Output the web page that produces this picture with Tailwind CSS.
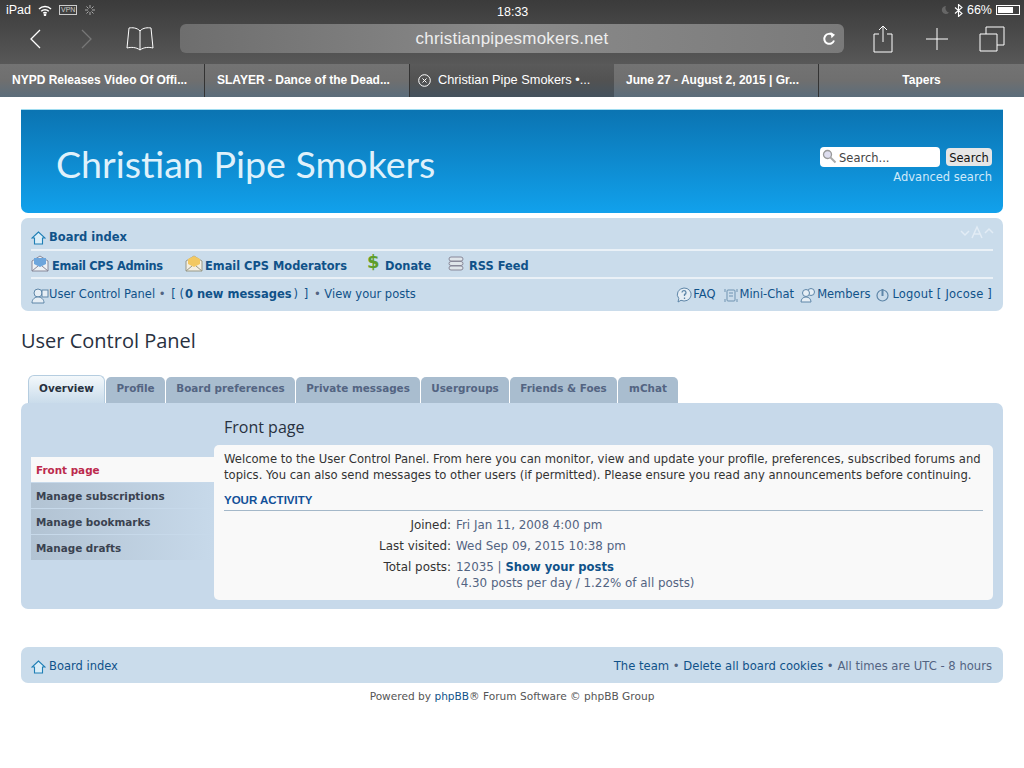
<!DOCTYPE html>
<html lang="en">
<head>
<meta charset="UTF-8">
<title>User Control Panel</title>
<script src="https://cdn.jsdelivr.net/npm/@tailwindcss/browser@4"></script>
</head>
<body class="bg-white w-[1024px] h-[768px] overflow-hidden font-['DejaVu_Sans',sans-serif] text-[11.5px] text-[#536482]">
  <!-- ipad safari chrome -->
  <div class="h-[64px] bg-gradient-to-b from-[#3b3b3b] to-[#585858] text-white font-['Liberation_Sans',sans-serif]">
    <div class="h-[20px] flex items-center justify-between pl-[6px] pr-[4px] text-[12.5px] relative">
      <div class="flex items-center gap-[7px]">
        <span>iPad</span>
        <svg width="14" height="11" viewBox="0 0 14 11" fill="none" stroke="#fff" stroke-width="1.5"><path d="M1 4a8.5 8.5 0 0 1 12 0M3.2 6.2a5.4 5.4 0 0 1 7.6 0M5.3 8.2a2.4 2.4 0 0 1 3.4 0"/><circle cx="7" cy="9.8" r=".6" fill="#fff"/></svg>
        <span class="border border-[#ccc] text-[7px] leading-[8px] px-[1px] text-[#ccc]">VPN</span>
        <svg width="12" height="12" viewBox="0 0 12 12" stroke="#aaa" stroke-width="1"><path d="M6 1v3M6 8v3M1 6h3M8 6h3M2.500 2.500l2 2M7.500 7.500l2 2M9.500 2.500l-2 2M4.500 7.500l-2 2"/></svg>
      </div>
      <span class="absolute left-[497px] top-[3px]">18:33</span>
      <div class="flex items-center gap-[4px]">
        <svg width="10" height="10" viewBox="0 0 10 10"><path d="M6 1a4 4 0 1 0 3 6.500A4.500 4.500 0 0 1 6 1z" fill="#666"/></svg>
        <svg width="9" height="13" viewBox="0 0 9 13" fill="none" stroke="#fff" stroke-width="1.100"><path d="M1 3.500l7 6-3.500 3V.5L8 3.500l-7 6"/></svg>
        <span>66%</span>
        <div class="w-[24px] h-[10px] border border-white p-[1px] flex"><div class="w-[15px] bg-white"></div></div>
      </div>
    </div>
    <div class="h-[37px] flex items-center">
      <svg class="ml-[29px]" width="12" height="20" viewBox="0 0 12 20" fill="none" stroke="#fff" stroke-width="1.300"><path d="M11 1L2 10l9 9"/></svg>
      <svg class="ml-[40px]" width="12" height="20" viewBox="0 0 12 20" fill="none" stroke="#777" stroke-width="1.300"><path d="M1 1l9 9-9 9"/></svg>
      <svg class="ml-[33px]" width="28" height="26" viewBox="0 0 28 26" fill="none" stroke="#fff" stroke-width="1"><path d="M14 5C11 1.500 6 1.500 3 2L1 22c4-1 9-1 13 2 4-3 9-3 13-2L25 2c-3-.5-8-.5-11 3zM14 5v19"/></svg>
      <div class="ml-[26px] w-[664px] h-[29px] rounded-[6px] bg-gradient-to-r from-[#6e6e6e] via-[#8a8a8a] to-[#7a7a7a] flex items-center justify-center text-[17px] text-[#eee] relative tracking-[0.2px]">
        christianpipesmokers.net
        <svg class="absolute right-[7px] top-[7px]" width="15" height="15" viewBox="0 0 15 15" fill="none" stroke="#fff" stroke-width="2"><path d="M12 9.500A5 5 0 1 1 10.500 4"/><path d="M8.500 1l4.500 2.800-3.500 3.500z" fill="#fff" stroke="none"/></svg>
      </div>
      <svg class="ml-[29px]" width="20" height="28" viewBox="0 0 20 28" fill="none" stroke="#fff" stroke-width="1"><path d="M6 9H1v18h18V9h-5M10 17V1M6 5l4-4 4 4"/></svg>
      <svg class="ml-[33px]" width="22" height="22" viewBox="0 0 22 22" stroke="#fff" stroke-width="1"><path d="M11 0v22M0 11h22"/></svg>
      <svg class="ml-[31px]" width="26" height="26" viewBox="0 0 26 26" fill="none" stroke="#fff" stroke-width="1"><path d="M1 8h17v17H1zM7 8V1h18v18h-7"/></svg>
    </div>
  </div>
  <div class="h-[33px] flex text-[12px] font-bold text-white font-['Liberation_Sans',sans-serif]">
    <div class="w-[205px] pl-[12px] pb-[1px] flex items-center border-r border-[#333] bg-gradient-to-b from-[#737373] via-[#6f6f6f] to-[#5b6d7b]">NYPD Releases Video Of Offi...</div>
    <div class="w-[205px] pl-[12px] pb-[1px] flex items-center border-r border-[#333] bg-gradient-to-b from-[#737373] via-[#6f6f6f] to-[#5b6d7b]">SLAYER - Dance of the Dead...</div>
    <div class="w-[204px] pl-[8px] pb-[1px] flex items-center gap-[7px] font-normal text-[12.8px] bg-gradient-to-b from-[#5a5a5a] via-[#525252] to-[#44525d]">
      <svg width="13" height="13" viewBox="0 0 13 13" fill="none" stroke="#fff"><circle cx="6.500" cy="6.500" r="5.800"/><path d="M4.500 4.500l4 4M8.500 4.500l-4 4"/></svg>
      <span>Christian Pipe Smokers •...</span>
    </div>
    <div class="w-[205px] pl-[12px] pb-[1px] flex items-center border-r border-[#333] bg-gradient-to-b from-[#737373] via-[#6f6f6f] to-[#5b6d7b]">June 27 - August 2, 2015 | Gr...</div>
    <div class="flex-1 pb-[1px] flex items-center justify-center bg-gradient-to-b from-[#737373] via-[#6f6f6f] to-[#5b6d7b]">Tapers</div>
  </div>

  <!-- forum page -->
  <div class="pl-[21px] pr-[21px] pt-[12px]">
    <div class="h-[104px] rounded-b-[7px] border-t border-[#9fdcf0] bg-gradient-to-b from-[#0b74b2] to-[#11a1ec] flex justify-between pl-[35px] pr-[11px]">
      <div class="pt-[29px] text-[37.6px] leading-[50px] text-[#dff1fb] font-['Lato',sans-serif] font-normal">Christian Pipe Smokers</div>
      <div class="pt-[37px] flex flex-col items-end gap-[3px]">
        <div class="flex items-center gap-[6px]">
          <div class="w-[120px] h-[20px] bg-white rounded-[4px] flex items-center pl-[2px] pt-[3px] gap-[2px] text-[#444]">
            <svg class="-mt-[4px]" width="15" height="15" viewBox="0 0 15 15" fill="none"><circle cx="5.500" cy="5.500" r="4" fill="#dde" stroke="#999" stroke-width="1.300"/><path d="M8.500 8.500l5 5" stroke="#aaa" stroke-width="2"/></svg>
            Search...
          </div>
          <div class="w-[46px] h-[18px] bg-[#e6e6e6] rounded-[4px] flex items-center justify-center pt-[3px] text-[#111]">Search</div>
        </div>
        <div class="text-[#cfeafa] leading-[14px]">Advanced search</div>
      </div>
    </div>

    <div class="mt-[5px] h-[93px] rounded-[7px] bg-[#cadceb] px-[10px] relative">
      <div class="h-[33px] flex items-center gap-[3px] font-bold text-[#105289] border-b-2 border-white/60 pt-[9px]">
        <svg width="15" height="14" viewBox="0 0 15 14" fill="#dbeef8" stroke="#1f7fb5" stroke-width="1.100"><path d="M7.500 1L1 7h2.500v6h8V7H14z"/></svg>
        Board index
      </div>
      <svg class="absolute right-[9px] top-[7px]" width="34" height="14" viewBox="0 0 34 14" fill="none" stroke="#e2ecf5" stroke-width="1.500"><path d="M1 6l4 4 4-4M25 8l4-4 4 4"/><path d="M12 13l5-11 5 11M14 9h6"/></svg>
      <div class="h-[28px] flex items-center font-bold text-[#105289] border-b-2 border-white/60 text-[11.4px] pt-[5px]">
        <svg width="18" height="17" viewBox="0 0 18 17" class="-mt-[7px]"><path d="M1 6l8-5 8 5v10H1z" fill="#eef2f5" stroke="#889"/><path d="M3 3h12v6l-6 3-6-3z" fill="#6ea6dc"/><path d="M1 16l6-5M17 16l-6-5" stroke="#889" fill="none"/></svg>
        <span class="ml-[3px] w-[111px] tracking-[-0.3px] whitespace-nowrap">Email CPS Admins</span>
        <svg width="18" height="17" viewBox="0 0 18 17" class="ml-[22px] -mt-[7px]"><path d="M1 6l8-5 8 5v10H1z" fill="#f4efe2" stroke="#998"/><path d="M3 4l6-3 6 3v5l-6 3-6-3z" fill="#f2c862"/><path d="M1 16l6-5M17 16l-6-5" stroke="#998" fill="none"/></svg>
        <span class="ml-[2px] w-[142px] whitespace-nowrap">Email CPS Moderators</span>
        <span class="ml-[20px] -mt-[9px] text-[18px] leading-none text-[#5f9e2a] w-[10px]">$</span>
        <span class="ml-[8px] w-[46px]">Donate</span>
        <svg width="16" height="15" viewBox="0 0 16 15" class="ml-[17px] -mt-[7px]" fill="#dfe5ea" stroke="#889"><rect x="1" y="1" width="14" height="4" rx="2"/><rect x="1" y="5.500" width="14" height="4" rx="2"/><rect x="1" y="10" width="14" height="4" rx="2"/></svg>
        <span class="ml-[5px]">RSS Feed</span>
      </div>
      <div class="h-[32px] flex items-center justify-between text-[#105289]">
        <div class="flex items-center">
          <svg width="18" height="17" viewBox="0 0 18 17" fill="#e6eef5" stroke="#5e86a8"><circle cx="7" cy="6" r="4"/><path d="M1 16c0-4 3-6 6-6s6 2 6 6z"/><rect x="11" y="3" width="6" height="7"/></svg>
          <span>User Control Panel <span class="text-[#536482]">•</span> <span class="ml-[2px]">[ (<b class="ml-[1px]">0 new messages</b><span class="ml-[2px]">)</span> <span class="ml-[2px]">]</span></span> <span class="ml-[2px] text-[#536482]">•</span> View your posts</span>
        </div>
        <div class="flex items-center mr-[1px]">
          <svg class="-ml-[1px]" width="16" height="16" viewBox="0 0 16 16" fill="#e6eef5" stroke="#5e86a8"><path d="M8 1a7 6.500 0 1 1-3 12.300L2 15l.8-3.500A7 6.500 0 0 1 8 1z"/><path d="M6 5.500a2 2 0 1 1 2.500 2V9M8.500 10.500V12" fill="none" stroke-width="1.300"/></svg>
          <span class="ml-[1px]">FAQ</span>
          <svg class="ml-[8px]" width="14" height="15" viewBox="0 0 14 15" fill="none" stroke="#6f93b1"><rect x="3" y="2" width="8" height="11" rx="1"/><path d="M1 1v3M13 1v3M1 11v3M13 11v3M5 5h4M5 8h4"/></svg>
          <span class="ml-[2px]">Mini-Chat</span>
          <svg class="ml-[6px]" width="17" height="16" viewBox="0 0 17 16" fill="#e6eef5" stroke="#5e86a8"><circle cx="11" cy="5" r="3.500"/><circle cx="6" cy="6" r="3.500"/><path d="M1 15c0-3 2-5 5-5s5 2 5 5z"/></svg>
          <span>Members</span>
          <svg class="ml-[6px]" width="13" height="14" viewBox="0 0 13 14" fill="none" stroke="#5e86a8" stroke-width="1.200"><circle cx="6.500" cy="7.500" r="5.500"/><path d="M6.500 1v7" stroke-width="2"/></svg>
          <span class="ml-[3px] tracking-[0.2px]">Logout [ Jocose ]</span>
        </div>
      </div>
    </div>

    <h2 class="mt-[17px] text-[20px] leading-[26px] text-[#28313f] font-['Open_Sans',sans-serif]">User Control Panel</h2>

    <div class="mt-[21px] pl-[7px] flex items-end h-[28px] gap-[1px] font-bold text-[#536482] text-[10.4px]">
      <div class="h-[28px] w-[77px] pb-[2px] rounded-t-[6px] border border-b-0 border-[#b5cde0] bg-gradient-to-b from-[#f3f8fb] to-[#cadceb] text-[#28313f] flex items-center justify-center">Overview</div>
      <div class="h-[26px] w-[59px] pb-[2px] rounded-t-[5px] bg-[#a9bdcf] flex items-center justify-center">Profile</div>
      <div class="h-[26px] w-[129px] pb-[2px] rounded-t-[5px] bg-[#a9bdcf] flex items-center justify-center">Board preferences</div>
      <div class="h-[26px] w-[124px] pb-[2px] rounded-t-[5px] bg-[#a9bdcf] flex items-center justify-center">Private messages</div>
      <div class="h-[26px] w-[88px] pb-[2px] rounded-t-[5px] bg-[#a9bdcf] flex items-center justify-center">Usergroups</div>
      <div class="h-[26px] w-[107px] pb-[2px] rounded-t-[5px] bg-[#a9bdcf] flex items-center justify-center">Friends &amp; Foes</div>
      <div class="h-[26px] w-[60px] pb-[2px] rounded-t-[5px] bg-[#a9bdcf] flex items-center justify-center">mChat</div>
    </div>

    <div class="h-[206px] rounded-[7px] bg-[#c7d9ea] flex pl-[10px] pr-[10px]">
      <div class="w-[183px] pt-[54px] text-[10.4px] font-bold text-[#3a4250]">
        <div class="h-[25px] bg-[#f9f9f9] flex items-center pl-[5px] pt-[3px] text-[#bc2a4d] mb-[1px]">Front page</div>
        <div class="h-[25px] bg-gradient-to-r from-[#b2c3d3] to-[#c7d9ea] flex items-center pl-[5px] pt-[3px] mb-[1px]">Manage subscriptions</div>
        <div class="h-[25px] bg-gradient-to-r from-[#b2c3d3] to-[#c7d9ea] flex items-center pl-[5px] pt-[3px] mb-[1px]">Manage bookmarks</div>
        <div class="h-[25px] bg-gradient-to-r from-[#b2c3d3] to-[#c7d9ea] flex items-center pl-[5px] pt-[3px]">Manage drafts</div>
      </div>
      <div class="flex-1">
        <h3 class="pt-[12px] pl-[10px] h-[42px] text-[16px] leading-[24px] text-[#28313f] font-['Open_Sans',sans-serif]">Front page</h3>
        <div class="h-[155px] bg-[#f9f9f9] rounded-[5px] px-[10px] pt-[6px] text-[#333]">
          <p class="leading-[16px] text-[11.6px]">Welcome to the User Control Panel. From here you can monitor, view and update your profile, preferences, subscribed forums and topics. You can also send messages to other users (if permitted). Please ensure you read any announcements before continuing.</p>
          <div class="mt-[10px] h-[18px] border-b border-[#a4b8c9] text-[#115098] font-bold text-[11.5px] font-['Liberation_Sans',sans-serif] leading-[15px]">YOUR ACTIVITY</div>
          <div class="mt-[6px] grid grid-cols-[227px_1fr] gap-x-[5px] leading-[16px] text-[11.9px]">
            <div class="text-right h-[21px]">Joined:</div><div class="text-[#536482]">Fri Jan 11, 2008 4:00 pm</div>
            <div class="text-right h-[21px]">Last visited:</div><div class="text-[#536482]">Wed Sep 09, 2015 10:38 pm</div>
            <div class="text-right">Total posts:</div>
            <div class="text-[#536482]">12035 | <b class="text-[#105289] text-[11.6px]">Show your posts</b><br>(4.30 posts per day / 1.22% of all posts)</div>
          </div>
        </div>
      </div>
    </div>

    <div class="mt-[38px] h-[36px] rounded-[7px] bg-[#cadceb] flex items-center justify-between pl-[10px] pr-[11px] pt-[3px] text-[#105289]">
      <div class="flex items-center gap-[3px]">
        <svg width="15" height="14" viewBox="0 0 15 14" fill="#dbeef8" stroke="#1f7fb5" stroke-width="1.100"><path d="M7.500 1L1 7h2.500v6h8V7H14z"/></svg>
        Board index
      </div>
      <div class="text-[11.6px]">The team <span class="text-[#536482]">•</span> Delete all board cookies <span class="text-[#536482]">• All times are UTC - 8 hours</span></div>
    </div>
    <div class="mt-[6px] text-center text-[10.6px] text-[#555]">Powered by <span class="text-[#105289]">phpBB</span>® Forum Software © phpBB Group</div>
  </div>
</body>
</html>
